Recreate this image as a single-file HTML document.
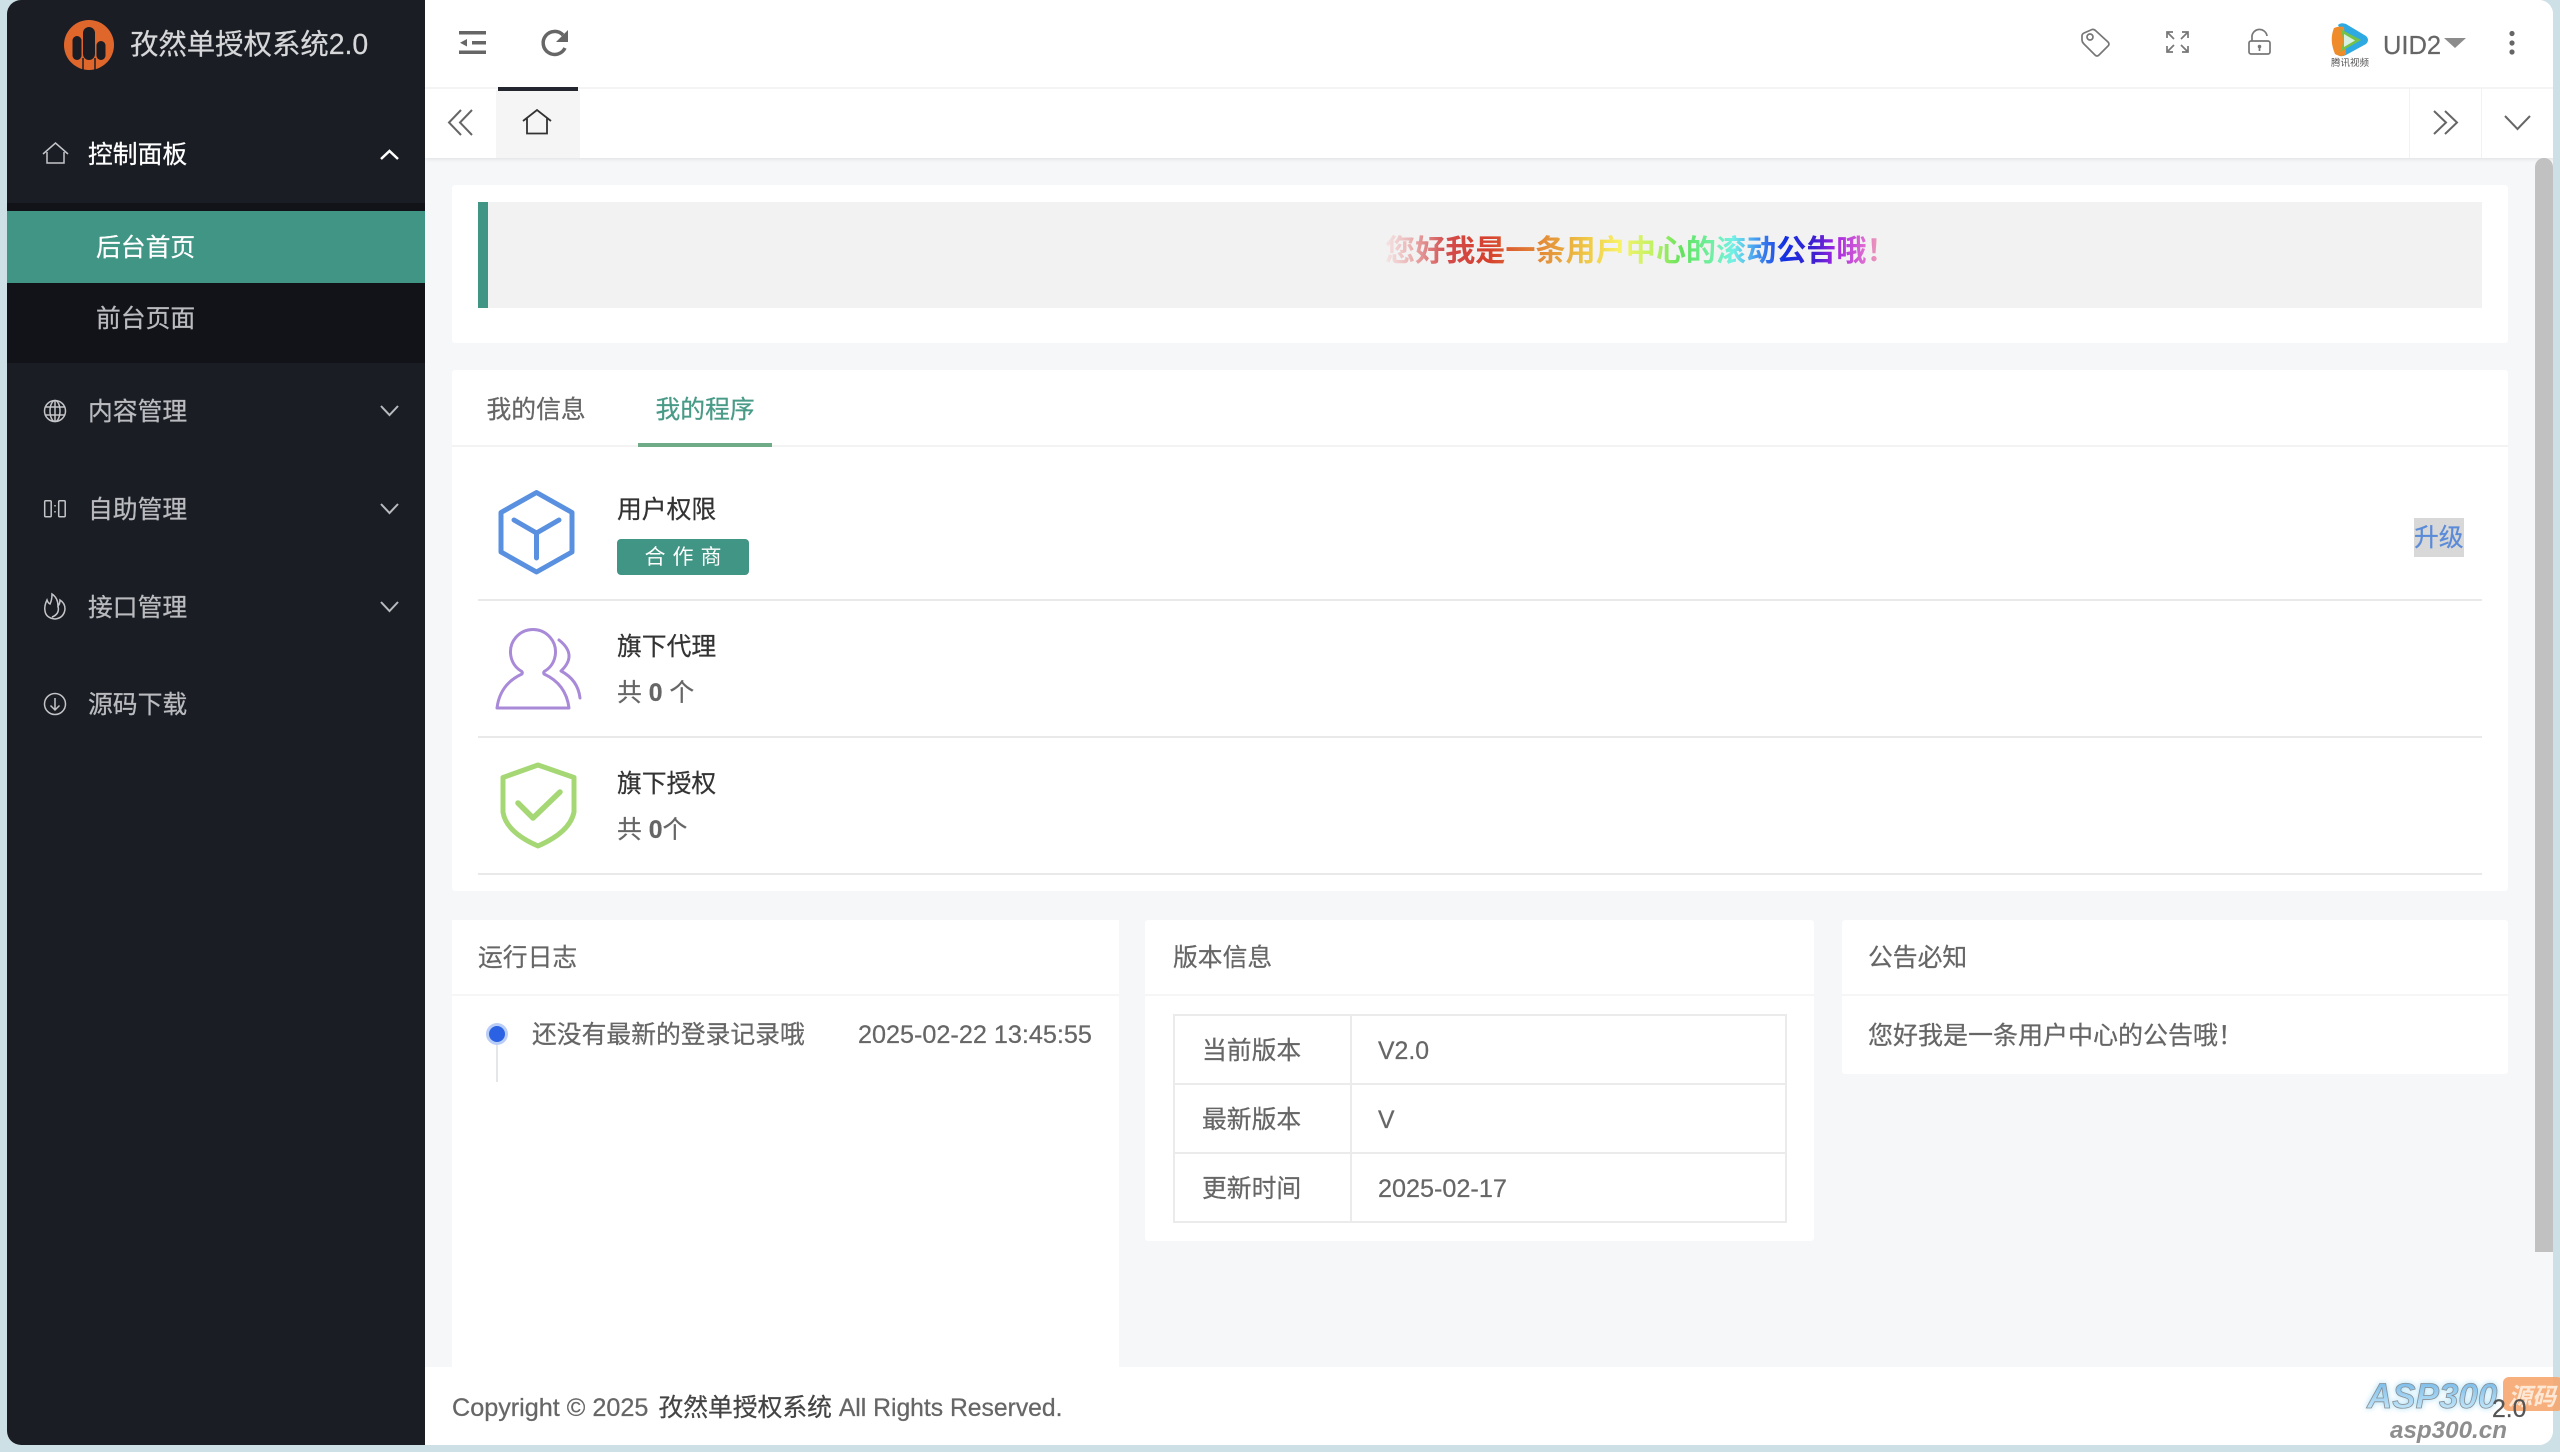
<!DOCTYPE html>
<html lang="zh-CN">
<head>
<meta charset="utf-8">
<title>孜然单授权系统2.0</title>
<style>
html,body{margin:0;padding:0;width:2560px;height:1452px;overflow:hidden;background:#cde0e5;}
body{position:relative;font-family:"Liberation Sans","Noto Sans CJK SC",sans-serif;font-size:24.8px;color:#666;}
#win{position:absolute;left:0;top:0;width:2560px;height:1452px;clip-path:inset(0 7px 7px 7px round 14px);background:#f5f7f9;}
.b{position:absolute;}
.t{position:absolute;line-height:40px;height:40px;white-space:nowrap;margin-top:2px;-webkit-text-stroke:.25px currentColor;}
.side{color:#b9bbbf;}
.d{font-size:25.2px;}
svg.ov{position:absolute;left:0;top:0;width:2560px;height:1452px;pointer-events:none;}
</style>
</head>
<body>
<div id="win">
  <!-- header + tabs -->
  <div class="b" style="left:425px;top:0;width:2135px;height:158px;background:#fff;box-shadow:0 1px 4px rgba(0,0,0,.10);"></div>
  <div class="b" style="left:425px;top:87px;width:2135px;height:2px;background:#f4f4f4;"></div>
  <div class="b" style="left:496px;top:90px;width:84px;height:68px;background:#f5f5f5;"></div>
  <div class="b" style="left:498px;top:87px;width:80px;height:3.5px;background:#23262e;"></div>
  <div class="b" style="left:2409px;top:88px;width:1px;height:70px;background:#f2f2f2;"></div>
  <div class="b" style="left:2481px;top:88px;width:1px;height:70px;background:#f2f2f2;"></div>
  <div class="t" style="left:2383px;top:24px;color:#666;font-size:25.5px;">UID2</div>

  <!-- sidebar -->
  <div class="b" style="left:7px;top:0;width:418px;height:1452px;background:#1b1d25;"></div>
  <div class="b" style="left:7px;top:203px;width:418px;height:160px;background:#121319;"></div>
  <div class="b" style="left:7px;top:211px;width:418px;height:72px;background:#409584;"></div>
  <div class="t" style="left:130px;top:23px;font-size:28.4px;color:#d6d7d9;">孜然单授权系统2.0</div>
  <div class="t" style="left:88px;top:134px;color:#fff;">控制面板</div>
  <div class="t" style="left:96px;top:227px;color:#fff;">后台首页</div>
  <div class="t side" style="left:96px;top:298px;">前台页面</div>
  <div class="t side" style="left:88px;top:391px;">内容管理</div>
  <div class="t side" style="left:88px;top:489px;">自助管理</div>
  <div class="t side" style="left:88px;top:587px;">接口管理</div>
  <div class="t side" style="left:88px;top:684px;">源码下载</div>

  <!-- notice card -->
  <div class="b" style="left:452px;top:185px;width:2056px;height:158px;background:#fff;border-radius:3px;"></div>
  <div class="b" style="left:478px;top:202px;width:2004px;height:106px;background:#f2f2f2;"></div>
  <div class="b" style="left:478px;top:202px;width:10px;height:106px;background:#409584;"></div>
  <div class="t" style="left:1385px;top:229.500px;font-size:30.1px;font-weight:bold;-webkit-text-stroke:0;color:transparent;background:linear-gradient(90deg,#f5e6e6 0%,#eab4b4 5%,#d24c4c 12%,#d6402e 20%,#e07a34 28%,#e8a83e 35%,#f0cc48 40%,#f8f268 46%,#c4f264 52%,#62e25e 58%,#70f0a4 64%,#72f0e6 68%,#4ca4f0 72%,#1030e2 78%,#4020d0 84%,#a424e2 88%,#e272d0 94%,#f2ba9c 98%,#f2e8e0 100%);-webkit-background-clip:text;background-clip:text;">您好我是一条用户中心的滚动公告哦！</div>

  <!-- program card -->
  <div class="b" style="left:452px;top:370px;width:2056px;height:521px;background:#fff;border-radius:3px;"></div>
  <div class="b" style="left:452px;top:445px;width:2056px;height:2px;background:#f3f3f3;"></div>
  <div class="b" style="left:638px;top:443px;width:134px;height:3.5px;background:#6fab87;"></div>
  <div class="t" style="left:486.500px;top:389px;color:#666;">我的信息</div>
  <div class="t" style="left:655.500px;top:389px;color:#4a9a88;">我的程序</div>
  <div class="b" style="left:478px;top:599px;width:2004px;height:2px;background:#e9e9e9;"></div>
  <div class="b" style="left:478px;top:736px;width:2004px;height:2px;background:#e9e9e9;"></div>
  <div class="b" style="left:478px;top:873px;width:2004px;height:2px;background:#e9e9e9;"></div>
  <div class="t" style="left:617px;top:489px;color:#333;">用户权限</div>
  <div class="b" style="left:617px;top:539px;width:132px;height:36px;background:#409584;border-radius:4px;color:#fff;text-align:center;line-height:38px;font-size:21px;letter-spacing:7px;text-indent:7px;white-space:nowrap;">合作商</div>
  <div class="t" style="left:617px;top:626px;color:#333;">旗下代理</div>
  <div class="t" style="left:617px;top:672px;color:#666;">共 <b>0</b> 个</div>
  <div class="t" style="left:617px;top:763px;color:#333;">旗下授权</div>
  <div class="t" style="left:617px;top:809px;color:#666;">共 <b>0</b>个</div>
  <div class="b" style="left:2414px;top:518px;width:50px;height:39px;background:#d8d8d8;"></div>
  <div class="t" style="left:2414px;top:517px;color:#5b8bd8;">升级</div>

  <!-- bottom cards -->
  <div class="b" style="left:452px;top:920px;width:667px;height:447px;background:#fff;"></div>
  <div class="b" style="left:452px;top:994px;width:667px;height:2px;background:#f6f6f6;"></div>
  <div class="t" style="left:478px;top:937px;color:#666;">运行日志</div>
  <div class="b" style="left:496px;top:1040px;width:2px;height:42px;background:#e4e6ea;"></div>
  <div class="b" style="left:486px;top:1023px;width:22px;height:22px;border-radius:50%;background:#b9cdf6;"></div>
  <div class="b" style="left:489px;top:1026px;width:16px;height:16px;border-radius:50%;background:#2b62e3;"></div>
  <div class="t" style="left:532px;top:1014px;color:#666;">还没有最新的登录记录哦</div>
  <div class="t d" style="left:858px;top:1012.500px;color:#666;">2025-02-22 13:45:55</div>

  <div class="b" style="left:1145px;top:920px;width:669px;height:321px;background:#fff;border-radius:3px;"></div>
  <div class="b" style="left:1145px;top:994px;width:669px;height:2px;background:#f6f6f6;"></div>
  <div class="t" style="left:1173px;top:937px;color:#666;">版本信息</div>
  <div class="b" style="left:1173px;top:1014px;width:610px;height:205px;border:2px solid #ebebeb;"></div>
  <div class="b" style="left:1173px;top:1083px;width:614px;height:2px;background:#ebebeb;"></div>
  <div class="b" style="left:1173px;top:1152px;width:614px;height:2px;background:#ebebeb;"></div>
  <div class="b" style="left:1350px;top:1014px;width:2px;height:209px;background:#ebebeb;"></div>
  <div class="t" style="left:1202px;top:1030px;">当前版本</div>
  <div class="t" style="left:1378px;top:1030px;">V2.0</div>
  <div class="t" style="left:1202px;top:1099px;">最新版本</div>
  <div class="t" style="left:1378px;top:1099px;">V</div>
  <div class="t" style="left:1202px;top:1168px;">更新时间</div>
  <div class="t d" style="left:1378px;top:1166.500px;">2025-02-17</div>

  <div class="b" style="left:1842px;top:920px;width:666px;height:154px;background:#fff;border-radius:3px;"></div>
  <div class="b" style="left:1842px;top:994px;width:666px;height:2px;background:#f6f6f6;"></div>
  <div class="t" style="left:1868px;top:937px;color:#666;">公告必知</div>
  <div class="t" style="left:1868px;top:1014px;font-size:25px;color:#666;">您好我是一条用户中心的公告哦！</div>

  <!-- scrollbar -->
  <div class="b" style="left:2535px;top:158px;width:18px;height:1094px;background:#c1c1c1;border-radius:9px 9px 0 0;"></div>

  <!-- footer -->
  <div class="b" style="left:425px;top:1367px;width:2135px;height:85px;background:#fff;"></div>
  <div class="t" style="left:452px;top:1386px;font-size:25.2px;color:#666;">Copyright © 2025 <span style="color:#444;font-size:24.8px;margin-left:3px;">孜然单授权系统</span><span style="font-size:24.7px;"> All Rights Reserved.</span></div>

  <svg class="ov" viewBox="0 0 2560 1452" xmlns="http://www.w3.org/2000/svg" fill="none">
    <!-- logo -->
    <circle cx="89" cy="45" r="25" fill="#e0672c"/>
    <g fill="#1b1d25">
      <rect x="83" y="27" width="12" height="33" rx="6"/>
      <rect x="72.500" y="36" width="9" height="24" rx="4.500"/>
      <rect x="96.500" y="41" width="9" height="19" rx="4.500"/>
    </g>
    <path d="M83 58V70M95 58V70" stroke="#1b1d25" stroke-width="1.500"/>
    <!-- sidebar icons -->
    <g stroke="#c4c5c9" stroke-width="1.500">
      <path d="M43 154L55.500 143L68 154M47 152V163H64V152"/>
      <circle cx="55" cy="411" r="10.500"/>
      <ellipse cx="55" cy="411" rx="5" ry="10.500"/>
      <path d="M45 407H65M45 415H65M55 400V422"/>
      <rect x="44.700" y="500.700" width="6.500" height="16" rx="1"/>
      <rect x="58.700" y="500.700" width="6.500" height="16" rx="1"/>
      <path d="M55 505V506.500M55 511V512.500"/>
      <path d="M47 600Q44 606 45 611Q46 618 55 619Q64 618 65 609Q65 603 60 600Q60 604 58 606Q58 598 52 594Q52 600 50 604Q48 603 47 600Z"/>
      <path d="M52 617Q60 614 58 606"/>
      <circle cx="55" cy="704" r="10.500"/>
      <path d="M55 698V710M50.500 705.500L55 710L59.500 705.500"/>
    </g>
    <path d="M381 159L389.500 151L398 159" stroke="#fff" stroke-width="2.500"/>
    <g stroke="#b9bbbf" stroke-width="2">
      <path d="M381 406L389.500 415L398 406"/>
      <path d="M381 504L389.500 513L398 504"/>
      <path d="M381 602L389.500 611L398 602"/>
    </g>
    <!-- header left -->
    <g fill="#666">
      <rect x="459" y="31" width="27" height="3.500"/>
      <rect x="472" y="41" width="14" height="3.500"/>
      <rect x="459" y="50.500" width="27" height="3.500"/>
      <polygon points="460,42.700 467,39 467,46.500"/>
      <polygon points="568,30 568,42 556,42"/>
    </g>
    <path d="M565 48A11.500 11.500 0 1 1 563 35" stroke="#666" stroke-width="3.500"/>
    <!-- tabs -->
    <path d="M461 110L449 122.500L461 135M472 110L460 122.500L472 135" stroke="#666" stroke-width="2"/>
    <path d="M523 121L537 110L551 121M527 118V133.500H547V118" stroke="#333" stroke-width="1.800"/>
    <path d="M2434 111L2446 122.500L2434 134M2445 111L2457 122.500L2445 134" stroke="#666" stroke-width="2"/>
    <path d="M2505 116L2517.500 129L2530 116" stroke="#666" stroke-width="2"/>
    <!-- header right -->
    <g stroke="#777" stroke-width="1.700">
      <path d="M2084 33L2092 29.500Q2094 29 2096 31L2108 42Q2110 44 2108 46L2099 55Q2097 57 2095 55L2084 44Q2082 42 2082 40L2082 36Q2082 34 2084 33Z"/>
      <circle cx="2090" cy="37" r="3"/>
      <path d="M2167 38V32H2173M2167 32L2174 39M2182 32H2188V38M2188 32L2181 39M2167 46V52H2173M2167 52L2174 45M2188 46V52H2182M2188 52L2181 45"/>
      <rect x="2249" y="41" width="21" height="13" rx="2"/>
      <path d="M2252 41V38A7.500 7.500 0 0 1 2267 36"/>
      <path d="M2259.500 47V51"/>
    </g>
    <circle cx="2259.500" cy="46.500" r="1.800" fill="#777"/>
    <polygon points="2444,38 2466,38 2455,48" fill="#8c8c8c"/>
    <g fill="#666">
      <circle cx="2512" cy="33.500" r="2.600"/><circle cx="2512" cy="43" r="2.600"/><circle cx="2512" cy="52" r="2.600"/>
    </g>
    <!-- avatar -->
    <path d="M2338 25Q2341 22 2346 24L2366 36Q2370 40 2366 44L2346 55Q2340 58 2337 54L2345 40Z" fill="#2fa9e2"/>
    <path d="M2334 28Q2338 26 2344 27L2346 54Q2342 58 2335 54Q2329 40 2334 28Z" fill="#ef8b2a"/>
    <path d="M2340 29L2361 40L2340 52Q2346 41 2340 29Z" fill="#77c244"/>
    <polygon points="2344,34 2355,40.500 2344,47" fill="#d6f0e2"/>
    <text x="2331" y="66" font-size="9.500" fill="#555" font-family="'Liberation Sans','Noto Sans CJK SC',sans-serif">腾讯视频</text>
    <!-- cube -->
    <path d="M536.500 492.500L572 512.500V552L536.500 572L501 552V512.500Z" stroke="#5a90e0" stroke-width="5" stroke-linejoin="round"/>
    <path d="M514 520L536.500 533L559 520M536.500 533V558" stroke="#5a90e0" stroke-width="5" stroke-linecap="round"/>
    <!-- people -->
    <g stroke="#a98ad8" stroke-width="3" stroke-linejoin="round" stroke-linecap="round">
      <path d="M521 671A22.500 22.500 0 1 1 545 671Q543 672 544 674Q566 684 569 708H497Q500 684 522 674Q523 672 521 671Z"/>
      <path d="M559 640Q578 655 561 671Q578 680 580 698"/>
    </g>
    <!-- shield -->
    <path d="M538 765L574 777.500V812Q570 832 538 846Q506 832 503 812V777.500Z" stroke="#a5d875" stroke-width="5" stroke-linejoin="round"/>
    <path d="M518 803L533 818L560 792" stroke="#a5d875" stroke-width="5.500" stroke-linecap="round" stroke-linejoin="round"/>
  </svg>
</div>

<!-- watermark -->
<svg class="ov" viewBox="0 0 2560 1452" xmlns="http://www.w3.org/2000/svg">
  <defs>
    <linearGradient id="wg" x1="0" y1="0" x2="0" y2="1">
      <stop offset="0" stop-color="#6db5e8"/><stop offset="1" stop-color="#d4effc"/>
    </linearGradient>
  </defs>
  <rect x="2503" y="1377" width="60" height="34" rx="6" fill="#f5a66f" opacity=".9"/>
  <text x="2508" y="1405" font-size="24" font-weight="bold" font-style="italic" fill="#fde8d6" font-family="'Liberation Sans','Noto Sans CJK SC',sans-serif">源码</text>
  <text x="2367" y="1408" font-size="35" font-weight="bold" font-style="italic" fill="url(#wg)" stroke="#8a8f94" stroke-width=".8" style="filter:drop-shadow(0 0 3px #a5dff8)" font-family="'Liberation Sans',sans-serif">ASP300</text>
  <text x="2390" y="1438" font-size="24.200" font-weight="bold" font-style="italic" fill="#8e8e8e" font-family="'Liberation Sans',sans-serif">asp300.cn</text>
</svg>
<div class="t" style="left:2492px;top:1388px;color:#555;">2.0</div>
</body>
</html>
